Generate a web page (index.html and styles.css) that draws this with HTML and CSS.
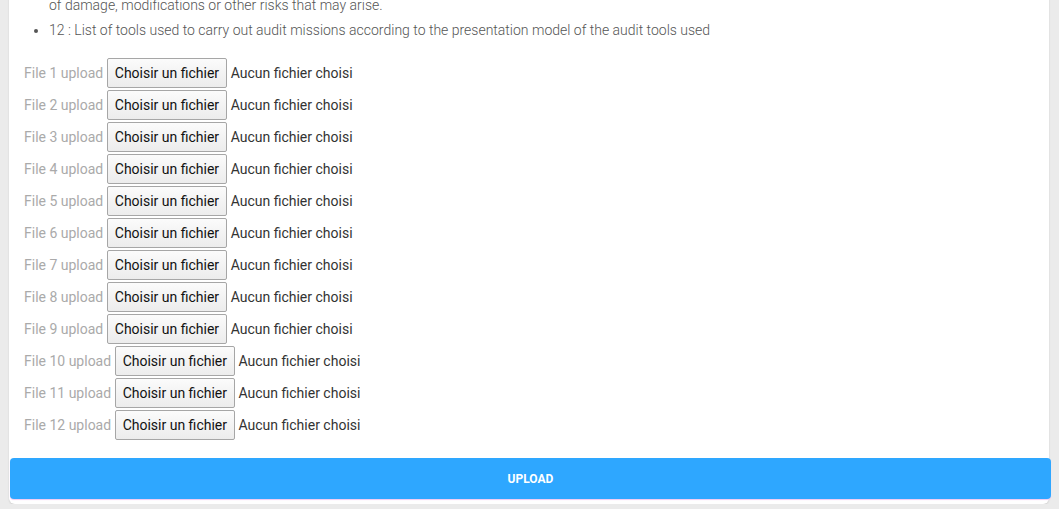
FILE: index.html
```html
<!DOCTYPE html>
<html lang="fr">
<head>
<meta charset="utf-8">
<link rel="stylesheet" href="styles.css">
<title>Upload</title>
</head>
<body>
<div class="card">
  <ul class="doc-list">
    <li class="continued">of damage, modifications or other risks that may arise.</li>
    <li>12 : List of tools used to carry out audit missions according to the presentation model of the audit tools used</li>
  </ul>
  <form class="upload-form">
    <div class="row"><span class="lbl">File 1 upload</span><button type="button" class="pick">Choisir un fichier</button><span class="none">Aucun fichier choisi</span></div>
    <div class="row"><span class="lbl">File 2 upload</span><button type="button" class="pick">Choisir un fichier</button><span class="none">Aucun fichier choisi</span></div>
    <div class="row"><span class="lbl">File 3 upload</span><button type="button" class="pick">Choisir un fichier</button><span class="none">Aucun fichier choisi</span></div>
    <div class="row"><span class="lbl">File 4 upload</span><button type="button" class="pick">Choisir un fichier</button><span class="none">Aucun fichier choisi</span></div>
    <div class="row"><span class="lbl">File 5 upload</span><button type="button" class="pick">Choisir un fichier</button><span class="none">Aucun fichier choisi</span></div>
    <div class="row"><span class="lbl">File 6 upload</span><button type="button" class="pick">Choisir un fichier</button><span class="none">Aucun fichier choisi</span></div>
    <div class="row"><span class="lbl">File 7 upload</span><button type="button" class="pick">Choisir un fichier</button><span class="none">Aucun fichier choisi</span></div>
    <div class="row"><span class="lbl">File 8 upload</span><button type="button" class="pick">Choisir un fichier</button><span class="none">Aucun fichier choisi</span></div>
    <div class="row"><span class="lbl">File 9 upload</span><button type="button" class="pick">Choisir un fichier</button><span class="none">Aucun fichier choisi</span></div>
    <div class="row"><span class="lbl">File 10 upload</span><button type="button" class="pick">Choisir un fichier</button><span class="none">Aucun fichier choisi</span></div>
    <div class="row"><span class="lbl">File 11 upload</span><button type="button" class="pick">Choisir un fichier</button><span class="none">Aucun fichier choisi</span></div>
    <div class="row"><span class="lbl">File 12 upload</span><button type="button" class="pick">Choisir un fichier</button><span class="none">Aucun fichier choisi</span></div>
  </form>
  <button type="button" class="upload-btn">UPLOAD</button>
</div>
</body>
</html>
```
FILE: styles.css
```css
html, body {
  margin: 0;
  padding: 0;
  background: #ebebeb;
  font-family: Roboto, "Liberation Sans", sans-serif;
}
.card {
  background: #fff;
  margin: -5px 10px 0 9px;
  padding: 0 0 5px 0;
  border-radius: 0 0 6px 6px;
  box-shadow: 0 1px 2px rgba(0,0,0,0.12);
}
.doc-list {
  margin: 0;
  padding: 0 0 0 40px;
  font-size: 14px;
  font-weight: 300;
  color: #555;
}
.doc-list li {
  line-height: 20px;
  margin-bottom: 5px;
}
.doc-list li.continued {
  list-style: none;
}
.upload-form {
  padding: 13px 15px 18px 15px;
  display: flex;
  flex-direction: column;
  gap: 2px;
}
.row {
  display: flex;
  align-items: center;
  gap: 4px;
  height: 30px;
  font-size: 14px;
}
.lbl {
  color: #aaa;
}
.pick {
  height: 30px;
  padding: 0 6.5px;
  font-family: Roboto, "Liberation Sans", sans-serif;
  font-size: 14px;
  color: #111;
  background: linear-gradient(#fbfbfb, #ececec);
  border: 1px solid #a6a6a6;
  border-radius: 2px;
}
.none {
  color: #333;
}
.upload-btn {
  display: block;
  width: calc(100% + 1px);
  margin-left: 1px;
  height: 41px;
  border: none;
  border-radius: 4px;
  background: #2ea7ff;
  color: #fff;
  font-family: Roboto, "Liberation Sans", sans-serif;
  font-size: 12px;
  font-weight: 700;
  box-shadow: 0 1px 1px #efc8f2;
}
```
